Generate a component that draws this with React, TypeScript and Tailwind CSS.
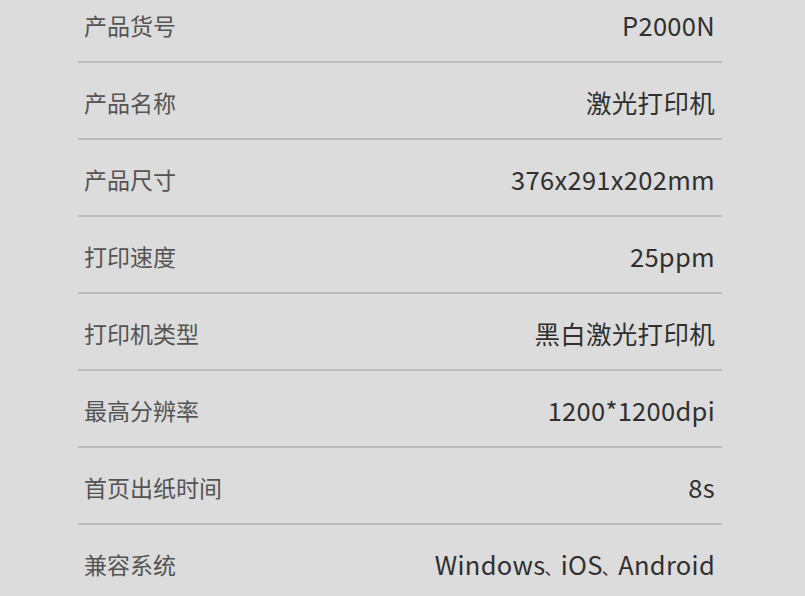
import React from "react";

const Dun = () => <span className="text-[17px] ml-[-1px] mr-[-1px]">、</span>;

const rows: [string, React.ReactNode][] = [
  ["产品货号", "P2000N"],
  ["产品名称", "激光打印机"],
  ["产品尺寸", "376x291x202mm"],
  ["打印速度", "25ppm"],
  ["打印机类型", "黑白激光打印机"],
  ["最高分辨率", "1200*1200dpi"],
  ["首页出纸时间", "8s"],
  [
    "兼容系统",
    <>
      Windows<Dun />iOS<Dun />Android
    </>,
  ],
];

export default function App() {
  return (
    <div
      className="w-[805px] h-[596px] overflow-hidden bg-[#dcdcdc]"
      style={{ fontFamily: '"Noto Sans CJK SC", "Noto Sans", sans-serif' }}
    >
      <div className="mt-[-14px] ml-[78px] w-[644px] flex flex-col">
        {rows.map(([k, v], i) => (
          <div
            key={i}
            className="h-[77px] border-b-[2px] border-[#bcbcbc] flex items-center justify-between pl-[6px] pr-[7px] pt-[4px]"
          >
            <span className="text-[23px] text-[#545454]">{k}</span>
            <span className="text-[25.5px] text-[#303030] tracking-[0.3px]">{v}</span>
          </div>
        ))}
      </div>
    </div>
  );
}
